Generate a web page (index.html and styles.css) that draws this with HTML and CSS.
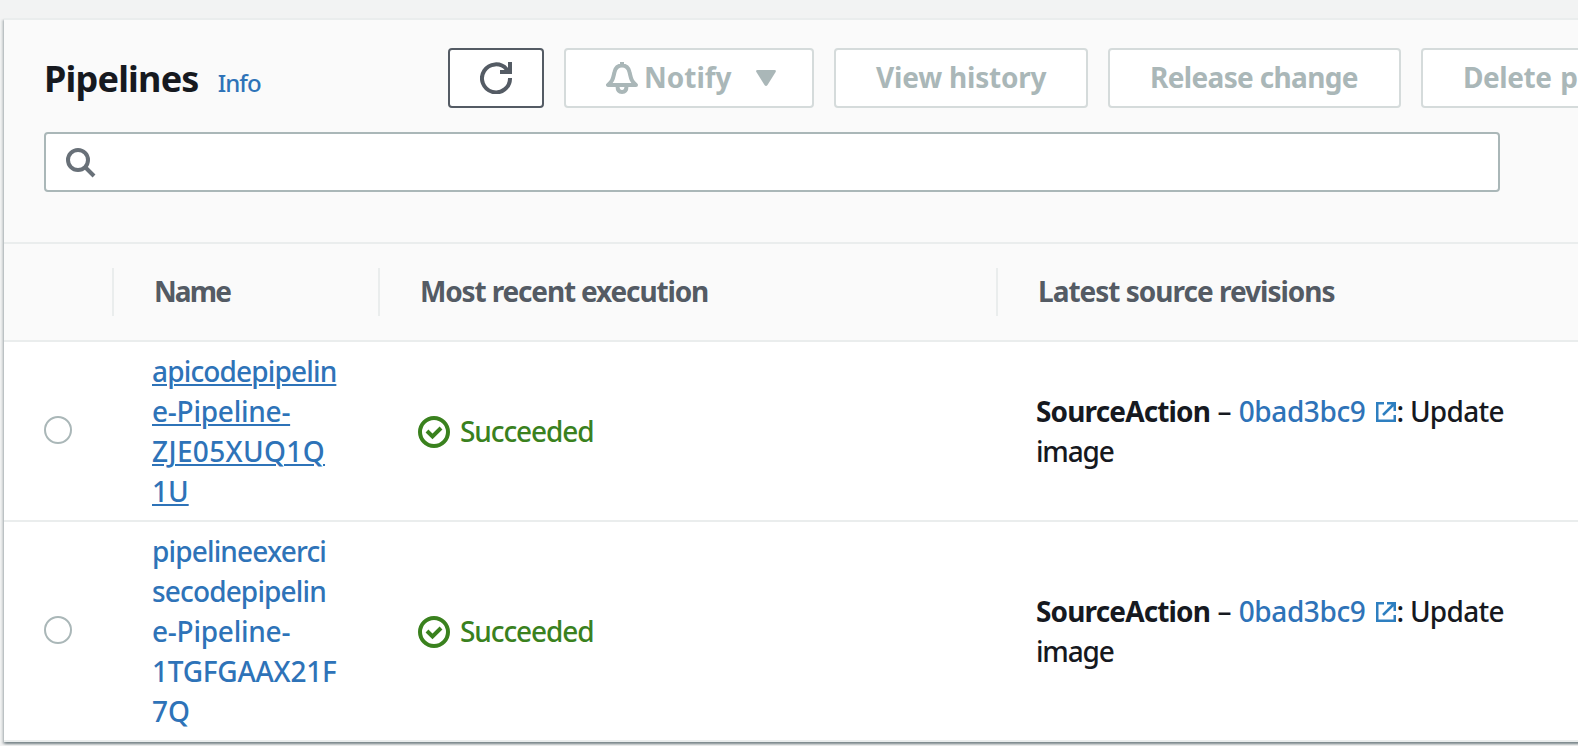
FILE: index.html
```
<!DOCTYPE html>
<html lang="en">
<head>
<meta charset="utf-8">
<title>Pipelines</title>
<link rel="stylesheet" href="styles.css">
</head>
<body>
<main class="panel">
  <header class="panel-header">
    <div class="toolbar">
      <div class="heading">
        <h1 class="title">Pipelines</h1>
        <a class="info">Info</a>
      </div>
      <div class="actions">
        <button class="btn btn-refresh" aria-label="Refresh">
          <svg width="32" height="32" viewBox="0 0 32 32" fill="none" stroke="currentColor" stroke-width="4"><path d="M30 16A14 14 0 1 1 26.600 7.200L29 10M30 0V10H20"/></svg>
        </button>
        <button class="btn btn-notify" disabled>
          <svg width="32" height="32" viewBox="0 0 32 32" fill="none" stroke="currentColor" stroke-width="4" stroke-linejoin="round"><path d="M16 0V4M2 23H30C25 19 25 16 23.500 10C22.500 5.500 20 3.500 16 3.500S9.500 5.500 8.500 10C7 16 7 19 2 23ZM11.500 24C11.500 28 13 30 16 30S20.500 28 20.500 24"/></svg>
          <span class="lbl">Notify</span>
          <svg class="caret" width="20" height="16" viewBox="0 0 20 16" fill="currentColor"><path d="M1.500 0H18.500Q20.600 0 19.600 2L11.500 15Q10 17 8.500 15L.4 2Q-.6 0 1.500 0Z"/></svg>
        </button>
        <button class="btn btn-history" disabled><span>View history</span></button>
        <button class="btn btn-release" disabled><span>Release change</span></button>
        <button class="btn btn-delete" disabled><span>Delete pipeline</span></button>
      </div>
    </div>
    <div class="search">
      <svg width="30" height="30" viewBox="0 0 30 30" fill="none" stroke="currentColor" stroke-width="4"><circle cx="12" cy="12" r="10"/><path d="M19 19L28 28"/></svg>
    </div>
  </header>
  <section class="grid">
    <div class="row head">
      <div class="cell"></div>
      <div class="cell head-name">Name</div>
      <div class="cell">Most recent execution</div>
      <div class="cell">Latest source revisions</div>
    </div>
    <div class="row">
      <div class="cell pick"><span class="radio"></span></div>
      <div class="cell"><a class="name hovered"><span class="tight">apicodepipelin</span><br><span class="snug">e-Pipeline-</span><br><span class="wide">ZJE05XUQ1Q</span><br><span>1U</span></a></div>
      <div class="cell status"><svg width="32" height="32" viewBox="0 0 32 32" fill="none" stroke="currentColor" stroke-width="4"><circle cx="16" cy="16" r="14"/><path d="M9 15L14.500 20.500L23 12"/></svg><span>Succeeded</span></div>
      <div class="cell source"><p><b>SourceAction</b> <span class="dash">–</span> <a class="commit">0bad3bc9</a><svg class="ext" width="20" height="20" viewBox="0 0 20 20" fill="none" stroke="currentColor" stroke-width="2.500"><path d="M8 1.250H1.250V18.750H18.750V13M11 1.250H18.750V9M18.500 1.500L7 13"/></svg><span class="msg">: Update</span><br><span class="img">image</span></p></div>
    </div>
    <div class="row">
      <div class="cell pick"><span class="radio"></span></div>
      <div class="cell"><a class="name"><span class="tight">pipelineexerci</span><br><span class="tight">secodepipelin</span><br><span class="snug">e-Pipeline-</span><br><span class="snug">1TGFGAAX21F</span><br><span>7Q</span></a></div>
      <div class="cell status"><svg width="32" height="32" viewBox="0 0 32 32" fill="none" stroke="currentColor" stroke-width="4"><circle cx="16" cy="16" r="14"/><path d="M9 15L14.500 20.500L23 12"/></svg><span>Succeeded</span></div>
      <div class="cell source"><p><b>SourceAction</b> <span class="dash">–</span> <a class="commit">0bad3bc9</a><svg class="ext" width="20" height="20" viewBox="0 0 20 20" fill="none" stroke="currentColor" stroke-width="2.500"><path d="M8 1.250H1.250V18.750H18.750V13M11 1.250H18.750V9M18.500 1.500L7 13"/></svg><span class="msg">: Update</span><br><span class="img">image</span></p></div>
    </div>
  </section>
</main>
</body>
</html>
```
FILE: styles.css
```
* { box-sizing: border-box; }
html, body { height: 100%; overflow: hidden; }
body {
  margin: 0;
  padding: 18px 0 0 4px;
  background: #f2f3f3;
  color: #16191f;
  font: 28px/40px "Noto Sans", sans-serif;
}
svg { display: block; flex: none; }
.panel {
  height: 724px;
  margin-right: -4px;
  background: #fff;
  border-top: 2px solid #eaeded;
  box-shadow: 0 2px 2px rgba(0, 28, 36, .3), 2px 2px 2px rgba(0, 28, 36, .15), -2px 2px 2px rgba(0, 28, 36, .15);
}
.panel-header {
  height: 224px;
  padding: 28px 0 0 40px;
  background: #fafafa;
  border-bottom: 2px solid #eaeded;
}
.toolbar { display: flex; height: 60px; }
.heading { display: flex; flex: none; align-items: baseline; width: 404px; padding-top: 6px; }
.title { margin: 0; font-size: 36px; line-height: 50px; font-weight: 700; letter-spacing: -.8px; }
.info { margin-left: 19px; font-size: 24px; color: #2e73b8; font-weight: 500; letter-spacing: -.9px; }
.actions { display: flex; gap: 20px; min-width: 0; flex: 1; overflow: hidden; }
.btn {
  display: flex;
  flex: none;
  align-items: center;
  height: 60px;
  padding: 0 0 0 40px;
  border: 2px solid #d5dbdb;
  border-radius: 4px;
  background: #fff;
  color: #aab7b8;
  font: 700 28px/40px "Noto Sans", sans-serif;
  white-space: nowrap;
}
.btn span { padding-bottom: 2px; }
.btn-refresh { width: 96px; padding: 0 0 0 30px; border-color: #545b64; color: #545b64; }
.btn-notify { width: 250px; }
.lbl { margin-left: 6px; }
.caret { margin-left: 24px; }
.btn-history { width: 254px; letter-spacing: -.2px; }
.btn-release { width: 293px; letter-spacing: -.65px; }
.btn-delete { width: 300px; letter-spacing: -.45px; word-spacing: 2px; }
.search {
  display: flex;
  width: 1456px;
  height: 60px;
  margin-top: 24px;
  padding: 14px 20px;
  border: 2px solid #aab7b8;
  border-radius: 4px;
  background: #fff;
  color: #687078;
}
.row {
  display: grid;
  grid-template-columns: 110px 266px 618px 1fr;
  align-items: center;
  padding: 9px 0;
  border-bottom: 2px solid #eaeded;
}
.cell { padding-left: 38px; }
.head { height: 98px; background: #fafafa; color: #545b64; font-weight: 700; letter-spacing: -1.15px; }
.head .cell { height: 48px; padding: 3px 0 0 40px; border-right: 2px solid #eaeded; }
.head .cell:last-child { border: 0; letter-spacing: -1px; }
.head .head-name { letter-spacing: -1.9px; }
.pick { padding: 0 0 2px 40px; }
.radio { display: block; width: 28px; height: 28px; border: 2px solid #aab7b8; border-radius: 50%; background: #fff; }
.name { color: #2e73b8; font-weight: 500; }
.hovered { text-decoration: underline; text-decoration-thickness: 2px; text-underline-offset: 2px; }
.tight { letter-spacing: -.85px; }
.snug { letter-spacing: -.25px; }
.wide { letter-spacing: .35px; }
.status { display: flex; align-items: center; color: #3a811e; letter-spacing: -1.1px; font-weight: 500; }
.status svg { margin-top: 2px; }
.status span { margin-left: 10px; }
.source p { margin: 0; white-space: nowrap; font-weight: 500; }
.source b { letter-spacing: -.85px; }
.commit { color: #2e73b8; letter-spacing: -.4px; }
.ext { display: inline-block; margin-left: 11px; color: #2e7fc0; vertical-align: 0; }
.msg { letter-spacing: -.7px; }
.img { letter-spacing: -1.2px; }
```
